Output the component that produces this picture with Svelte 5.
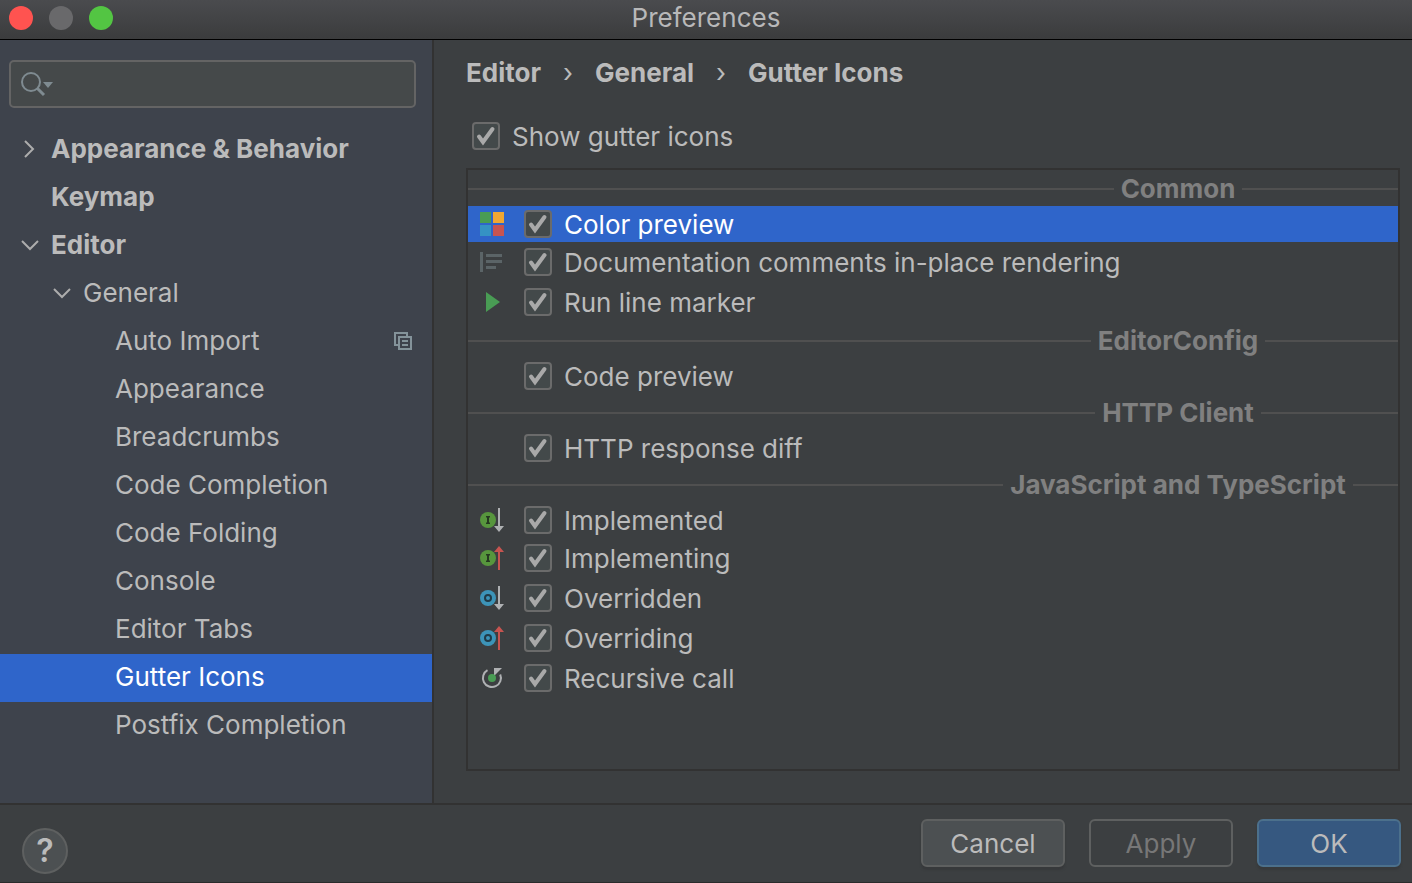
<script>
  const tree = [
    { label: 'Appearance & Behavior', level: 0, arrow: 'right' },
    { label: 'Keymap', level: 0 },
    { label: 'Editor', level: 0, arrow: 'down' },
    { label: 'General', level: 1, arrow: 'down' },
    { label: 'Auto Import', level: 2, perProject: true },
    { label: 'Appearance', level: 2 },
    { label: 'Breadcrumbs', level: 2 },
    { label: 'Code Completion', level: 2 },
    { label: 'Code Folding', level: 2 },
    { label: 'Console', level: 2 },
    { label: 'Editor Tabs', level: 2 },
    { label: 'Gutter Icons', level: 2 },
    { label: 'Postfix Completion', level: 2 },
  ];

  const path = ['Editor', 'General', 'Gutter Icons'];

  let groups = $state([
    {
      title: 'Common',
      items: [
        { label: 'Color preview', icon: 'color', checked: true },
        { label: 'Documentation comments in-place rendering', icon: 'doc', checked: true },
        { label: 'Run line marker', icon: 'run', checked: true },
      ],
    },
    { title: 'EditorConfig', items: [{ label: 'Code preview', checked: true }] },
    { title: 'HTTP Client', items: [{ label: 'HTTP response diff', checked: true }] },
    {
      title: 'JavaScript and TypeScript',
      items: [
        { label: 'Implemented', icon: 'implemented', checked: true },
        { label: 'Implementing', icon: 'implementing', checked: true },
        { label: 'Overridden', icon: 'overridden', checked: true },
        { label: 'Overriding', icon: 'overriding', checked: true },
        { label: 'Recursive call', icon: 'recursive', checked: true },
      ],
    },
  ]);

  let page = $state('Gutter Icons');
  let current = $state('Color preview');
  let showIcons = $state(true);
  let query = $state('');
</script>

{#snippet tick()}
  <svg class="tick" viewBox="0 0 28 28" aria-hidden="true">
    <path d="M7 14.500 L11 20 L20.500 7" />
  </svg>
{/snippet}

{#snippet gutterIcon(name)}
  <svg class="gutter-icon" viewBox="0 0 24 24" aria-hidden="true">
    {#if name === 'color'}
      <rect width="11" height="11" fill="#499c54" />
      <rect x="13" width="11" height="11" fill="#f0a732" />
      <rect y="13" width="11" height="11" fill="#3592c4" />
      <rect x="13" y="13" width="11" height="11" fill="#c75450" />
    {:else if name === 'doc'}
      <path d="M0 2h3v20H0zM6 4h16v3H6zM6 10h16v3H6zM6 16h10v3H6z" fill="#5b6467" />
    {:else if name === 'run'}
      <path d="M6 2 L20 12 L6 22z" fill="#499c54" />
    {:else if name === 'recursive'}
      <path d="M7.500 4.200 A9 9 0 1 0 20.200 8.500" fill="none" stroke="#afb1b3" stroke-width="2" />
      <path d="M14 2h8l-2.500 2.500-5.500 5.500z" fill="#afb1b3" />
      <circle cx="12" cy="12" r="4" fill="#499c54" />
    {:else if name}
      {#if name.startsWith('impl')}
        <circle cx="8" cy="12" r="8" fill="#57963d" />
        <path d="M6 8h4v1.500h-1v5h1V16H6v-1.500h1v-5H6z" fill="#253a20" />
      {:else}
        <circle cx="8" cy="12" r="8" fill="#3d94b8" />
        <circle cx="8" cy="12" r="3" fill="none" stroke="#213b47" stroke-width="2" />
      {/if}
      {#if name.endsWith('ing')}
        <path d="M19 0l5 6h-4v18h-2V6h-4z" fill="#c75450" />
      {:else}
        <path d="M19 24l5-6h-4V0h-2v18h-4z" fill="#afb1b3" />
      {/if}
    {/if}
  </svg>
{/snippet}

<div class="window">
  <header class="titlebar">
    <div class="lights">
      <button class="light close" aria-label="Close"></button>
      <button class="light minimize" aria-label="Minimize" disabled></button>
      <button class="light zoom" aria-label="Zoom"></button>
    </div>
    <h1>Preferences</h1>
  </header>

  <div class="content">
    <aside class="sidebar">
      <label class="search">
        <svg width="34" height="26" viewBox="0 0 34 26" aria-hidden="true">
          <circle cx="11" cy="11" r="9" fill="none" stroke="#7f8b91" stroke-width="2" />
          <path d="M17 17 L24 24" stroke="#7f8b91" stroke-width="3" />
          <path d="M23 11h10l-5 6z" fill="#7f8b91" />
        </svg>
        <input type="text" aria-label="Search settings" bind:value={query} />
      </label>

      <nav>
        <ul class="tree">
          {#each tree as node}
            <li>
              <button
                class="node level-{node.level}"
                class:selected={page === node.label}
                onclick={() => (page = node.label)}
              >
                <svg class="arrow" viewBox="0 0 24 24" aria-hidden="true">
                  {#if node.arrow === 'right'}
                    <path d="M7 4 L15 12 L7 20" />
                  {:else if node.arrow === 'down'}
                    <path d="M4 8 L12 16 L20 8" />
                  {/if}
                </svg>
                <span>{node.label}</span>
                {#if node.perProject}
                  <svg class="project" viewBox="0 0 18 18" aria-hidden="true">
                    <path d="M4 13H1V1h12v3M5 5h12v12H5zM8 9h6M8 13h6" />
                  </svg>
                {/if}
              </button>
            </li>
          {/each}
        </ul>
      </nav>
    </aside>

    <main class="panel">
      <div class="breadcrumbs">
        {#each path as part, i}
          {#if i > 0}<span class="sep">›</span>{/if}
          <span>{part}</span>
        {/each}
      </div>

      <label class="show-icons">
        <span class="check">
          <input type="checkbox" bind:checked={showIcons} />
          {@render tick()}
        </span>
        <span class="label">Show gutter icons</span>
      </label>

      <div class="list">
        {#each groups as group}
          <section>
            <div class="separator">
              <h2>{group.title}</h2>
            </div>
            {#each group.items as item}
              <label class="row" class:selected={current === item.label}>
                {@render gutterIcon(item.icon)}
                <span class="check">
                  <input
                    type="checkbox"
                    bind:checked={item.checked}
                    onfocus={() => (current = item.label)}
                  />
                  {@render tick()}
                </span>
                <span class="label">{item.label}</span>
              </label>
            {/each}
          </section>
        {/each}
      </div>
    </main>
  </div>

  <footer class="footer">
    <button class="help" aria-label="Help">?</button>
    <div class="actions">
      <button class="btn">Cancel</button>
      <button class="btn" disabled>Apply</button>
      <button class="btn primary">OK</button>
    </div>
  </footer>
</div>

<style>
  :global(body) {
    background: #3c3f41;
  }

  .window {
    display: flex;
    flex-direction: column;
    box-sizing: border-box;
    min-height: 100vh;
    border-bottom: 1px solid #2b2b2b;
    background: #3c3f41;
    color: #bbbbbb;
    font-family: Inter, 'Liberation Sans', sans-serif;
    font-size: 26px;
    line-height: 36px;
  }

  button,
  input {
    margin: 0;
    padding: 0;
    font: inherit;
    color: inherit;
  }

  svg {
    flex: none;
  }

  .titlebar {
    display: grid;
    grid-template-columns: 1fr auto 1fr;
    align-items: center;
    padding-bottom: 3px;
    border-bottom: 1px solid #000;
    background: linear-gradient(#4a4b4e, #3b3c3d);
  }
  .titlebar h1 {
    margin: 0;
    font-size: 26px;
    font-weight: 400;
    line-height: 36px;
    color: #b8b8b9;
  }

  .lights {
    display: flex;
    gap: 16px;
    padding-left: 9px;
  }
  .light {
    width: 24px;
    height: 24px;
    border: 0;
    border-radius: 50%;
  }
  .close {
    background: #ff5350;
  }
  .minimize {
    background: #69696b;
  }
  .zoom {
    background: #53c543;
  }

  .content {
    display: flex;
    flex: 1;
    border-bottom: 2px solid #323232;
  }

  .sidebar {
    flex: none;
    width: 432px;
    padding-top: 20px;
    border-right: 2px solid #323232;
    background: #3e434c;
  }

  .search {
    display: flex;
    align-items: center;
    gap: 8px;
    box-sizing: border-box;
    height: 48px;
    margin: 0 16px 18px 9px;
    padding: 0 9px;
    border: 2px solid #646464;
    border-radius: 5px;
    background: #45494a;
  }
  .search input {
    flex: 1;
    min-width: 0;
    border: 0;
    outline: 0;
    background: none;
  }

  .tree {
    margin: 0;
    padding: 0;
    list-style: none;
  }
  .node {
    display: flex;
    align-items: center;
    gap: 9px;
    width: 100%;
    height: 48px;
    padding: 0 20px 2px 18px;
    border: 0;
    background: none;
    text-align: left;
    white-space: nowrap;
  }
  .node span {
    flex: 1;
  }
  .level-0 {
    font-weight: 700;
  }
  .level-1 {
    padding-left: 50px;
  }
  .level-2 {
    padding-left: 82px;
  }
  .arrow {
    width: 24px;
    height: 24px;
    fill: none;
    stroke: #adadad;
    stroke-width: 2;
  }
  .project {
    width: 18px;
    height: 18px;
    fill: none;
    stroke: #84939a;
    stroke-width: 2;
  }
  .selected {
    background: #2f65ca;
    color: #fff;
  }

  .panel {
    display: flex;
    flex: 1;
    flex-direction: column;
    min-width: 0;
    padding: 15px 12px 32px 32px;
  }

  .breadcrumbs {
    display: flex;
    gap: 22px;
    font-weight: 700;
  }
  .sep {
    font-weight: 400;
  }

  .show-icons {
    display: flex;
    align-items: center;
    gap: 12px;
    margin: 26px 0 13px;
    padding-left: 6px;
  }

  .label {
    padding-top: 2px;
  }

  .check {
    display: grid;
    flex: none;
    width: 28px;
    height: 28px;
  }
  .check input,
  .tick {
    grid-area: 1 / 1;
  }
  .check input {
    box-sizing: border-box;
    width: 28px;
    height: 28px;
    border: 2px solid #6b6b6b;
    border-radius: 4px;
    outline: 0;
    appearance: none;
    background: #43494a;
  }
  .tick {
    visibility: hidden;
    pointer-events: none;
    fill: none;
    stroke: #a9a9a9;
    stroke-width: 4;
    stroke-linecap: round;
  }
  .check input:checked + .tick {
    visibility: visible;
  }

  .list {
    flex: 1;
    border: 2px solid #323232;
  }

  .separator {
    display: flex;
    align-items: center;
    box-sizing: border-box;
    height: 36px;
    padding-top: 2px;
  }
  .separator::before {
    flex: 1;
    height: 2px;
    background: #505050;
    content: '';
  }
  .separator h2 {
    display: flex;
    align-items: center;
    gap: 7px;
    width: 440px;
    margin: 0;
    font-size: 26px;
    font-weight: 700;
    color: #808080;
    white-space: nowrap;
  }
  .separator h2::before,
  .separator h2::after {
    flex: 1;
    height: 2px;
    background: #505050;
    content: '';
  }

  .row {
    display: flex;
    align-items: center;
    height: 40px;
    padding-left: 12px;
  }
  .separator + .row {
    height: 36px;
  }
  .row .check {
    margin: 0 12px 0 20px;
  }
  .gutter-icon {
    width: 24px;
    height: 24px;
  }

  .footer {
    display: flex;
    justify-content: space-between;
    padding: 14px 11px 8px 22px;
  }
  .help {
    align-self: flex-end;
    width: 46px;
    height: 46px;
    border: 2px solid #5e6060;
    border-radius: 50%;
    background: #4c5052;
    font-size: 32px;
    font-weight: 600;
    line-height: 36px;
  }
  .actions {
    display: flex;
    gap: 24px;
    padding-bottom: 7px;
  }
  .btn {
    width: 144px;
    height: 48px;
    padding-top: 2px;
    border: 2px solid #5e6060;
    border-radius: 6px;
    background: #4c5052;
    box-shadow: 0 3px 2px #37393b;
  }
  .btn:disabled {
    background: none;
    box-shadow: none;
    color: #777777;
  }
  .primary {
    border-color: #4c708c;
    background: #365880;
  }
</style>
